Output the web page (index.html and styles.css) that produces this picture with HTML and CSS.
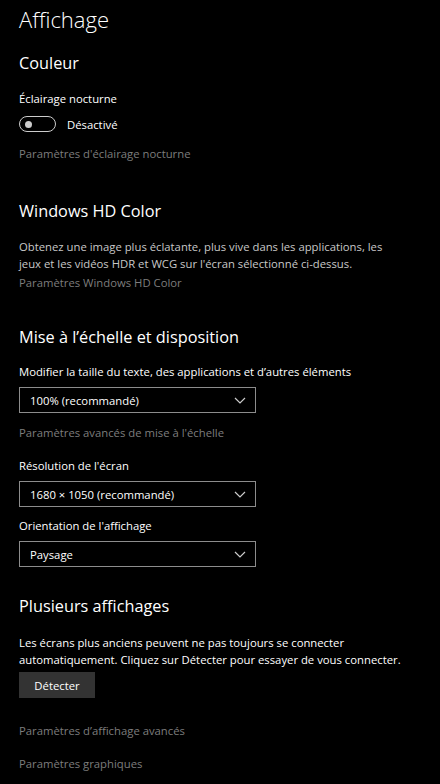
FILE: index.html
```html
<!DOCTYPE html>
<html lang="fr">
<head>
  <meta charset="UTF-8">
  <title>Affichage</title>
  <link rel="stylesheet" href="styles.css">
</head>
<body>
  <h1 class="page-title">Affichage</h1>

  <h2 class="section-title first">Couleur</h2>
  <div class="label night-label">Éclairage nocturne</div>
  <div class="toggle-row">
    <span class="toggle"><span class="knob"></span></span>
    <span class="toggle-text">Désactivé</span>
  </div>
  <a class="link night-link">Paramètres d'éclairage nocturne</a>

  <h2 class="section-title hd-title">Windows HD Color</h2>
  <p class="desc hd-desc">Obtenez une image plus éclatante, plus vive dans les applications, les jeux et les vidéos HDR et WCG sur l'écran sélectionné ci-dessus.</p>
  <a class="link hd-link">Paramètres Windows HD Color</a>

  <h2 class="section-title scale-title">Mise à l’échelle et disposition</h2>
  <div class="label scale-label">Modifier la taille du texte, des applications et d’autres éléments</div>
  <div class="select">
    <span>100% (recommandé)</span>
    <svg class="chevron" width="12" height="7" viewBox="0 0 12 7"><polyline points="1,1 6,6 11,1" fill="none" stroke="#ccc" stroke-width="1.2"/></svg>
  </div>
  <a class="link scale-link">Paramètres avancés de mise à l'échelle</a>

  <div class="label res-label">Résolution de l'écran</div>
  <div class="select">
    <span>1680 × 1050 (recommandé)</span>
    <svg class="chevron" width="12" height="7" viewBox="0 0 12 7"><polyline points="1,1 6,6 11,1" fill="none" stroke="#ccc" stroke-width="1.2"/></svg>
  </div>

  <div class="label orient-label">Orientation de l'affichage</div>
  <div class="select">
    <span>Paysage</span>
    <svg class="chevron" width="12" height="7" viewBox="0 0 12 7"><polyline points="1,1 6,6 11,1" fill="none" stroke="#ccc" stroke-width="1.2"/></svg>
  </div>

  <h2 class="section-title multi-title">Plusieurs affichages</h2>
  <p class="desc multi-desc">Les écrans plus anciens peuvent ne pas toujours se connecter automatiquement. Cliquez sur Détecter pour essayer de vous connecter.</p>
  <button class="detect">Détecter</button>

  <a class="link adv-link">Paramètres d’affichage avancés</a>
  <a class="link gfx-link">Paramètres graphiques</a>
</body>
</html>
```

FILE: styles.css
```css
body {
  margin: 0;
  padding: 5px 19px 0;
  background: #000;
  color: #fff;
  font-family: 'Open Sans', 'Noto Sans', sans-serif;
  font-size: 11.3px;
}

.page-title {
  margin: 0;
  font-size: 22px;
  font-weight: 300;
  line-height: 28px;
}

.section-title {
  margin: 0;
  font-size: 16.3px;
  font-weight: 400;
  line-height: 24px;
}

.section-title.first { margin-top: 18px; }
.hd-title { margin-top: 36px; }
.scale-title { margin-top: 33px; }
.multi-title { margin-top: 27px; }

.label {
  line-height: 18px;
}

.night-label { margin-top: 15px; }
.scale-label { margin-top: 14px; }
.res-label { margin-top: 15px; }
.orient-label { margin-top: 10px; }

.toggle-row {
  display: flex;
  align-items: center;
  gap: 11px;
  margin-top: 8px;
  height: 16px;
}

.toggle {
  box-sizing: border-box;
  width: 37px;
  height: 16px;
  border: 1.5px solid #ccc;
  border-radius: 8px;
  display: flex;
  align-items: center;
  padding-left: 5px;
}

.knob {
  width: 7px;
  height: 7px;
  border-radius: 50%;
  background: #ccc;
}

.link {
  display: block;
  color: #7d7d7d;
  line-height: 18px;
}

.night-link { margin-top: 13px; }
.hd-link { margin-top: 2px; }
.scale-link { margin-top: 11px; }
.adv-link { margin-top: 24px; }
.gfx-link { margin-top: 15px; }

.desc {
  margin: 0;
  line-height: 17px;
}

.hd-desc {
  margin-top: 15px;
  max-width: 374px;
  color: #c8c8c8;
}

.multi-desc {
  margin-top: 16px;
}

.select {
  box-sizing: border-box;
  width: 237px;
  height: 26px;
  margin-top: 6px;
  border: 1.5px solid #8c8c8c;
  display: flex;
  align-items: center;
  justify-content: space-between;
  padding: 0 9px 0 10px;
}

.detect {
  display: block;
  margin-top: 4px;
  width: 76px;
  height: 26px;
  border: none;
  background: #333;
  color: #fff;
  font-family: inherit;
  font-size: 11.3px;
  padding: 0;
}
```
